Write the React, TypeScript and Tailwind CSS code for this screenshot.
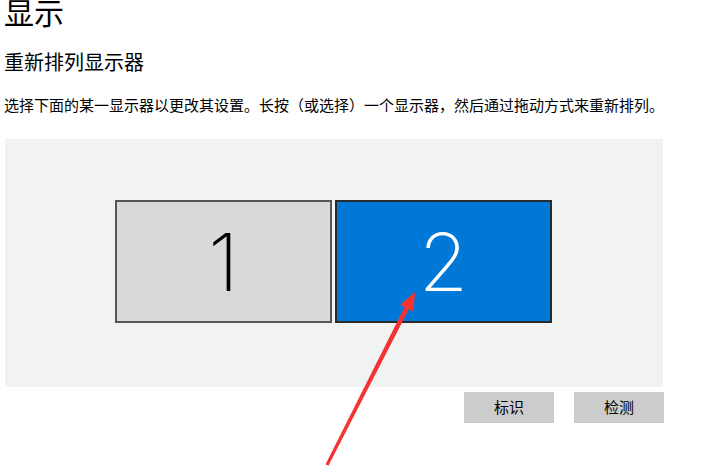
import React from 'react';

const font = { fontFamily: '"Noto Sans CJK SC", "Noto Sans", sans-serif' };

function Monitor({ n, active }: { n: string; active?: boolean }) {
  return (
    <div
      className={`w-[217px] h-[123px] flex items-center justify-center border-2 ${
        active ? 'bg-[#0078d7] border-[#2b2b2b] text-white' : 'bg-[#d9d9d9] border-[#555555] text-black'
      }`}
    >
      <span className="text-[80px] leading-none font-extralight" style={{ fontFamily: 'Inter, "Open Sans", sans-serif' }}>
        {n}
      </span>
    </div>
  );
}

export default function App() {
  return (
    <div className="relative w-[701px] h-[467px] overflow-hidden bg-white text-black" style={font}>
      <div className="flex flex-col pl-[4px]">
        <h1 className="text-[30px] leading-[30px] mt-[-4px]">显示</h1>
        <h2 className="text-[20px] leading-[20px] mt-[26px]">重新排列显示器</h2>
        <p className="text-[15px] leading-[15px] mt-[25px] whitespace-nowrap">
          选择下面的某一显示器以更改其设置。长按（或选择）一个显示器，然后通过拖动方式来重新排列。
        </p>
        <div className="ml-[1px] mt-[27px] w-[658px] h-[248px] bg-[#f1f2f2] flex gap-[3px] pl-[110px] pt-[61px]">
          <Monitor n="1" />
          <Monitor n="2" active />
        </div>
        <div className="w-[660px] mt-[5px] flex justify-end gap-[20px]">
          <button className="w-[90px] h-[31px] bg-[#cccccc] text-[15px]">标识</button>
          <button className="w-[90px] h-[31px] bg-[#cccccc] text-[15px]">检测</button>
        </div>
      </div>
      <svg className="absolute left-0 top-0 pointer-events-none" width="701" height="467" viewBox="0 0 701 467">
        <polygon points="325.6,464.3 328.4,465.7 409,309.1 404.6,306.9" fill="#f53333" />
        <polygon points="415,292 413.4,311.6 400.2,304.8" fill="#f53333" />
      </svg>
    </div>
  );
}
